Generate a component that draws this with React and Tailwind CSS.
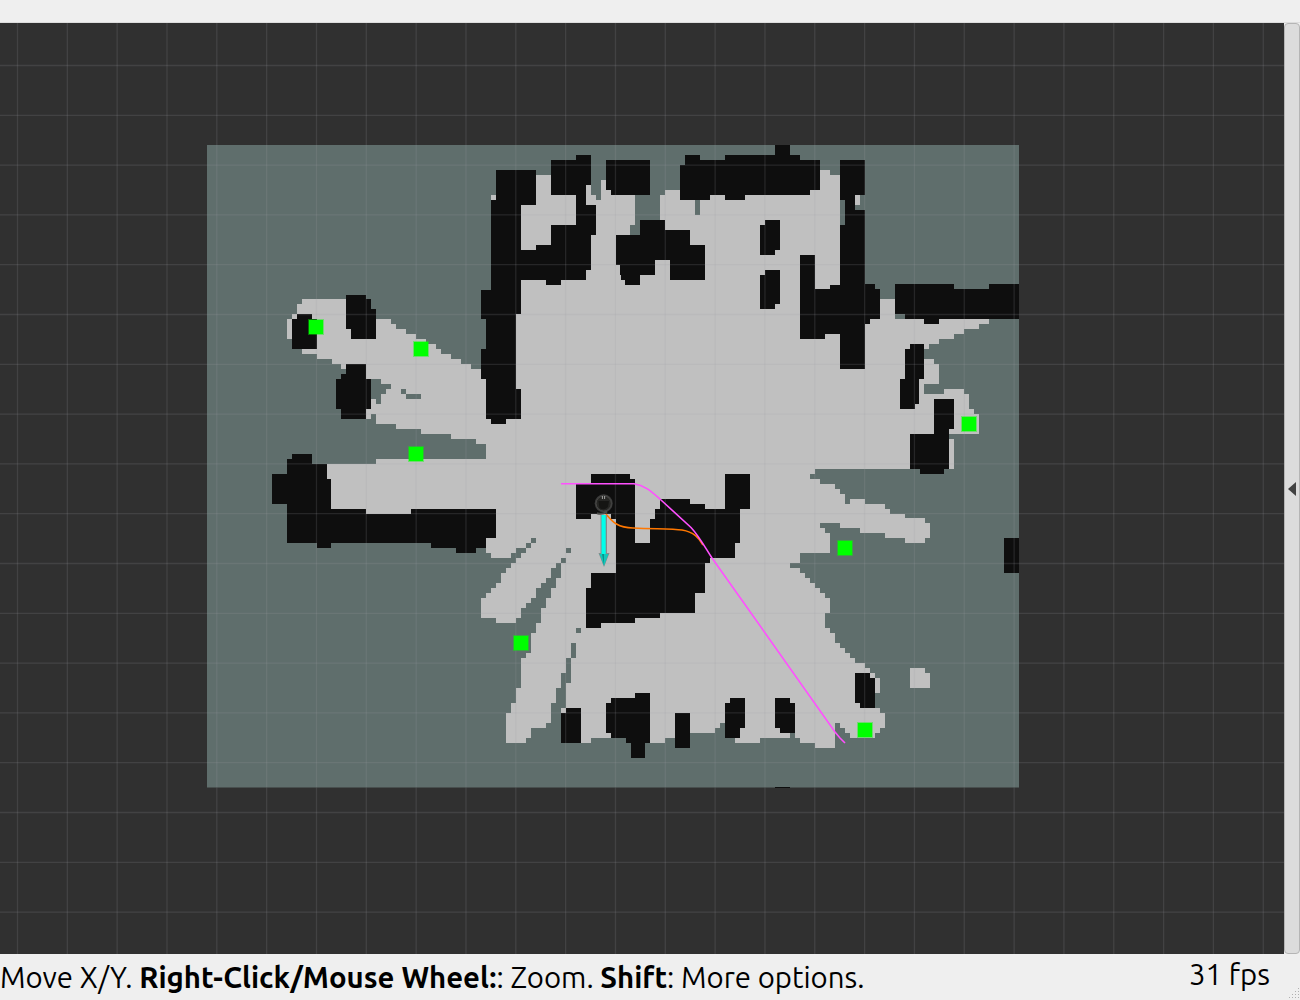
import React from "react";

const FREE =
  "M521 250V205H536V175H551V195H580V185H591V195H596V200H601V180H606V190H635V225H630V235H650V225H660V195H665V190H820V170H830V175H840V299H895V319H989V324H979V329H964V334H954V339H939V344H929V349H924V359H934V364H939V384H924V394H944V389H964V394H969V409H974V414H979V434H949V439H954V469H815V474H810V479H820V484H835V489H840V494H845V504H850V499H865V504H885V509H890V514H905V518H925V523H930V538H925V543H905V538H885V533H860V528H840V523H820V528H825V533H830V553H800V563H790V568H800V573H805V578H810V583H815V588H820V593H825V598H830V613H825V628H830V633H835V643H840V648H845V653H850V658H855V663H865V668H870V673H875V678H880V693H875V708H880V713H885V728H880V733H875V738H850V733H845V728H840V723H835V748H815V743H800V738H795V733H790V738H760V743H735V738H725V723H720V728H715V733H675V738H665V743H626V738H591V743H561V708H566V683H571V658H576V643H571V658H566V673H561V688H556V703H551V723H546V728H531V738H526V743H506V713H511V703H516V688H521V658H526V653H531V633H536V623H541V608H546V598H551V588H556V578H561V563H556V568H551V578H546V583H541V588H536V598H531V603H526V608H521V618H516V623H496V618H481V598H486V593H491V588H496V583H501V573H506V568H511V563H516V558H521V553H526V548H516V553H511V558H491V553H486V520H310V464H376V459H486V444H476V439H451V434H421V429H396V424H376V414H371V419H366V369H341V364H332V359H317V354H302V339H287V319H292V314H297V304H302V299H360V319H391V324H396V329H406V334H416V339H426V344H436V349H441V354H451V359H461V364H471V369H500V250Z" +
  "M491 195H496V200H491ZM855 195H860V205H855ZM910 668H925V673H930V688H910Z";

const UNKNOWN =
  "M695 200H700V215H695ZM371 379H381V384H391V389H386V394H381V404H376V399H371ZM401 389H406V394H401ZM406 394H421V399H406ZM561 558H566V563H561ZM566 548H571V553H566ZM531 538H536V543H531ZM526 543H531V548H526ZM516 548H526V553H516ZM511 553H521V558H511ZM556 563H561V578H556ZM571 643H576V658H571ZM566 658H571V683H566ZM561 673H566V708H561ZM576 628H581V633H576ZM635 195H660V220H640V235H635ZM860 195H865V210H855V205H860Z";

const OCCUPIED =
  "M496 170H536V205H521V250H536V245H551V225H576V195H551V160H576V155H591V185H586V205H596V235H591V270H586V280H561V285H546V280H521V314H516V389H521V419H506V424H491V419H486V379H481V349H486V319H481V290H491V200H496Z" +
  "M606 160H650V195H611V190H606Z" +
  "M616 235H640V220H665V230H690V245H705V280H670V260H655V275H640V285H625V280H621V275H620V265H616Z" +
  "M680 165H685V155H700V160H725V155H775V145H790V155H800V160H820V190H810V195H745V200H725V195H710V200H680Z" +
  "M760 225H765V220H780V250H775V255H760Z" +
  "M760 275H765V270H780V304H775V309H760Z" +
  "M840 160H865V195H855V210H865V284H875V289H880V319H870V324H865V369H840V334H825V339H800V255H815V289H830V285H840V225H845V200H840Z" +
  "M895 284H954V289H989V284H1019V319H939V324H924V319H905V314H895Z" +
  "M910 344H924V379H919V404H915V409H900V379H905V349H910Z" +
  "M934 399H954V429H949V469H944V474H920V469H910V434H934Z" +
  "M1004 538H1019V573H1004Z" +
  "M346 295H366V299H371V309H376V339H351V329H346Z" +
  "M297 314H312V319H317V349H292V319H297Z" +
  "M346 364H366V379H371V409H366V419H341V409H336V379H341V374H346Z" +
  "M292 454H312V464H327V479H331V509H366V514H411V509H496V538H486V548H476V553H456V548H431V543H331V548H317V543H287V504H272V474H287V459H292Z" +
  "M591 474H630V479H635V543H650V519H655V509H660V499H690V504H705V509H725V474H750V509H740V543H735V558H710V563H705V593H695V613H660V618H635V623H601V628H586V588H591V573H616V519H611V514H591V519H576V484H591Z" +
  "M566 708H581V743H561V713H566Z" +
  "M611 698H635V693H650V743H645V758H631V743H626V738H611V733H606V703H611Z" +
  "M675 713H690V748H675Z" +
  "M730 698H745V728H740V738H725V703H730Z" +
  "M775 698H790V703H795V733H780V728H775Z" +
  "M855 673H870V678H875V708H860V703H855Z" +
  "M775 787H790V788H775Z";

const GOALS = [
  [316, 327],
  [421, 349],
  [416, 454],
  [969, 424],
  [845, 548],
  [521, 643],
  [865, 730],
];

const COLUMNS = Array.from({ length: 26 }, (_, i) => 17.5 + i * 49.83);
const ROWS = Array.from({ length: 18 }, (_, i) => 65.5 + i * 49.8);

function Robot() {
  return (
    <g>
      <path d="M600.5 515H607V553H609.5L604 567L598.5 553H600.5Z" fill="#858b8b" />
      <path d="M601.5 515H605.7V554H601.5Z" fill="#00ffea" />
      <path d="M599.5 554H608.5L604 566Z" fill="#12c7ba" />
      <path d="M602 554H604L604 565Z" fill="#0a9389" />
      <circle cx="603.7" cy="503.3" r="9" fill="#3a3a3a" />
      <circle cx="603.7" cy="503.5" r="7.6" fill="#262624" stroke="#4c4c4a" strokeWidth="0.8" />
      <path d="M598.5 501H609L608 507Q604 511 599.5 508Z" fill="#151513" />
      <path d="M602.4 496V499M604.6 496V499" stroke="#a2a2a2" strokeWidth="1" />
      <path d="M597 513.3Q603 515 607 511.5" fill="none" stroke="#4b4b49" strokeWidth="2" />
    </g>
  );
}

function MapView() {
  return (
    <svg className="block h-[931px] w-[1284px] shrink-0 bg-[#303030]" viewBox="0 23 1284 931">
      <g shapeRendering="crispEdges">
        <rect x="207" y="145" width="812" height="642" fill="#5f6e6c" />
        <path d={FREE} fill="#c0c0c0" />
        <path d={UNKNOWN} fill="#5f6e6c" />
        <path d={OCCUPIED} fill="#0e0e0e" />
      </g>
      <g stroke="#a0a0a4" strokeOpacity="0.17" strokeWidth="1.3">
        {COLUMNS.map((x) => (
          <line key={x} x1={x} x2={x} y1="23" y2="954" />
        ))}
        {ROWS.map((y) => (
          <line key={y} x1="0" x2="1284" y1={y} y2={y} />
        ))}
      </g>
      <path d="M207 787.5H775M790 787.5H1019" stroke="#5f6e6c" strokeOpacity="0.5" fill="none" />
      {GOALS.map(([x, y]) => (
        <g key={x}>
          <rect x={x - 8} y={y - 8} width="16" height="16" fill="#00ff00" fillOpacity="0.4" />
          <rect x={x - 7} y={y - 7} width="14" height="14" fill="#00ff00" />
        </g>
      ))}
      <path
        d="M606 514C612 521 617 528 633 528C658 529 673 529 682 530C694 532 699 538 703 545"
        fill="none"
        stroke="#ff7700"
        strokeWidth="1.6"
      />
      <path
        d="M561 483.7H634C645 485 653 493 661 500L691 527.5C699 536 706 549 712 558L740 597.5L835 732L840 738L845 743"
        fill="none"
        stroke="#ff50ff"
        strokeWidth="1.6"
      />
      <Robot />
    </svg>
  );
}

function SideHandle() {
  return (
    <div className="flex h-[931px] w-4 items-center justify-center rounded border border-[#b5b5b5] bg-[#dcdcdc]">
      <svg className="h-[14px] w-2" viewBox="0 0 8 14">
        <path d="M0 7L8 0V14Z" fill="#414141" />
      </svg>
    </div>
  );
}

function StatusBar() {
  return (
    <footer className="flex h-[46px] justify-between bg-[#efefef] text-[29.333px] leading-[47px] text-black">
      <p className="whitespace-pre">
        Move X/Y. <b>Right-Click/Mouse Wheel:</b>: Zoom. <b>Shift</b>: More options.
      </p>
      <div className="flex">
        <span className="w-[100px] leading-[42px]">31 fps</span>
        <svg className="h-3 w-[11px] self-end" viewBox="0 0 11 12" fill="#b0b0b0">
          <path d="M9 0h1v1h-1zM6 3h1v1h-1zM9 3h1v1h-1zM3 6h1v1h-1zM6 6h1v1h-1zM9 6h1v1h-1zM0 9h1v1h-1zM3 9h1v1h-1zM6 9h1v1h-1zM9 9h1v1h-1z" />
        </svg>
      </div>
    </footer>
  );
}

export default function App() {
  return (
    <div className="flex h-[1000px] w-[1300px] flex-col overflow-hidden bg-[#efefef] font-['Ubuntu','Noto_Sans',sans-serif]">
      <header className="h-[23px] shrink-0 border-b border-[#dcdcdc] bg-[#efefef]" />
      <main className="flex h-[931px] shrink-0">
        <MapView />
        <SideHandle />
      </main>
      <StatusBar />
    </div>
  );
}
